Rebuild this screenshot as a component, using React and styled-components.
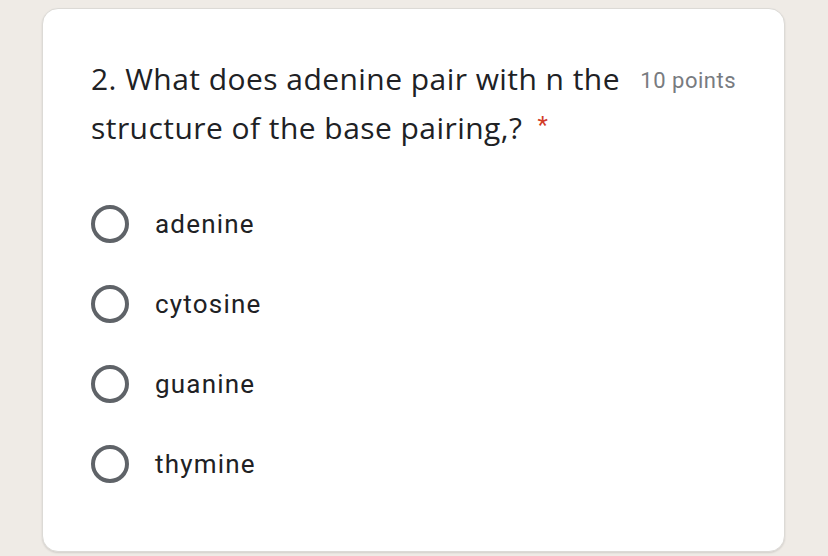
import React from 'react';
import styled, { createGlobalStyle } from 'styled-components';

const GlobalStyle = createGlobalStyle`
    html, body {
        margin: 0;
        padding: 0;
        background: #efebe6;
    }
`;

const Page = styled.div`
    width: 828px;
    height: 556px;
    box-sizing: border-box;
    padding: 8px 43px 4px 42px;
    background: #efebe6;
`;

const Card = styled.div`
    height: 100%;
    box-sizing: border-box;
    background: #ffffff;
    border: 1px solid #dcdad6;
    border-radius: 16px;
    box-shadow: 0 1px 2px rgba(0, 0, 0, 0.12);
    padding: 45px 48px 0 48px;
    display: flex;
    flex-direction: column;
`;

const Header = styled.div`
    display: flex;
    flex-direction: row;
    align-items: flex-start;
    justify-content: space-between;
`;

const Title = styled.div`
    width: 540px;
    font: normal normal 400 30px/49px "Open Sans", sans-serif;
    color: #202124;
    letter-spacing: 0.45px;
`;

const Required = styled.span`
    color: #d23c28;
    margin-left: 15px;
    font: normal normal 400 24px/24px Roboto, sans-serif;
    vertical-align: 6px;
`;

const Points = styled.div`
    margin-top: 7px;
    font: normal normal 400 22px/40px Roboto, sans-serif;
    letter-spacing: 0.5px;
    color: #787b7f;
    white-space: nowrap;
`;

const Options = styled.div`
    display: flex;
    flex-direction: column;
    margin-top: 32px;
`;

const Option = styled.label`
    display: flex;
    flex-direction: row;
    align-items: center;
    height: 80px;
`;

const Radio = styled.span`
    width: 30px;
    height: 30px;
    border: 4px solid #5f6368;
    border-radius: 50%;
    flex-shrink: 0;
`;

const OptionText = styled.span`
    margin-left: 26px;
    font: normal normal 400 26px/32px Roboto, sans-serif;
    letter-spacing: 1.2px;
    color: #202124;
`;

const choices = ['adenine', 'cytosine', 'guanine', 'thymine'];

const App = () => {
    return (
        <Page>
            <GlobalStyle />
            <Card>
                <Header>
                    <Title>
                        2. What does adenine pair with n the structure of the base pairing,?
                        <Required>*</Required>
                    </Title>
                    <Points>10 points</Points>
                </Header>
                <Options>
                    {choices.map(c => (
                        <Option key={c}>
                            <Radio />
                            <OptionText>{c}</OptionText>
                        </Option>
                    ))}
                </Options>
            </Card>
        </Page>
    );
};

export default App;
